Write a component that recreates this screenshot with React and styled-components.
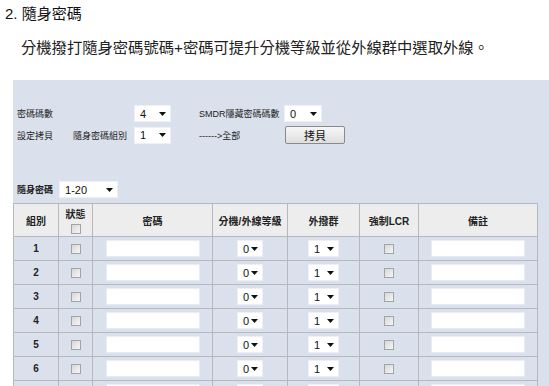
import React from 'react';
import styled, { createGlobalStyle } from 'styled-components';

const Global = createGlobalStyle`
  html, body { margin: 0; padding: 0; background: #fff; overflow: hidden; }
  body { font-family: "Liberation Sans", "Noto Sans CJK TC", sans-serif; color: #222; }
`;

const Page = styled.div`
  width: 549px;
  height: 386px;
  overflow: hidden;
`;

const Title = styled.h2`
  margin: 0;
  padding: 5px 0 0 5px;
  font-size: 15px;
  font-weight: normal;
  line-height: 18px;
  color: #111;
`;

const Desc = styled.p`
  margin: 17px 0 0 21px;
  font-size: 15.3px;
  line-height: 16px;
  color: #222;
  white-space: nowrap;
`;

const Panel = styled.div`
  margin: 24px 0 0 13px;
  width: 560px;
  height: 320px;
  background: #dae1ec;
  padding-top: 25px;
  box-sizing: border-box;
`;

const Settings = styled.div`
  display: grid;
  grid-template-columns: 56px 61px 65px 85px auto;
  row-gap: 4px;
  align-items: center;
  padding-left: 4px;
  font-size: 9px;
  color: #222;
`;

const Label = styled.span`
  grid-column: ${p => p.$span || 'auto'};
  white-space: nowrap;
`;

const SelectBox = styled.div`
  display: inline-flex;
  align-items: center;
  justify-content: space-between;
  width: ${p => p.$w}px;
  height: 17px;
  box-sizing: border-box;
  padding: 0 4px 0 5px;
  background: #fff;
  border: 1px solid #eef0f4;
  font-size: 11px;
  font-weight: normal;
  color: #111;
  vertical-align: middle;
`;

const Caret = () => (
  <svg width="7" height="4" viewBox="0 0 7 4">
    <path d="M0 0h7L3.5 4z" fill="#111" />
  </svg>
);

const Select = ({ w, value }) => (
  <SelectBox $w={w}>
    <span>{value}</span>
    <Caret />
  </SelectBox>
);

const Button = styled.button`
  margin-left: 1px;
  width: 60px;
  height: 18px;
  padding: 0;
  border: 1px solid #8a8a8a;
  border-radius: 2px;
  background: linear-gradient(#f7f7f7, #dedede);
  font-family: "Noto Sans CJK TC", sans-serif;
  font-size: 11px;
  line-height: 14px;
  color: #111;
`;

const GroupBar = styled.div`
  display: flex;
  align-items: center;
  gap: 6px;
  margin-top: 37px;
  padding-left: 4px;
  font-size: 9px;
  font-weight: bold;
  height: 17px;
`;

const Table = styled.table`
  margin-top: 5px;
  width: 524px;
  border-collapse: collapse;
  table-layout: fixed;
`;

const Th = styled.th`
  height: 32px;
  padding: 0;
  background: #ededed;
  border: 1px solid #b5b8bc;
  font-size: 10px;
  font-weight: bold;
  color: #222;
  text-align: center;
  vertical-align: middle;
`;

const Td = styled.td`
  height: 23px;
  padding: 0;
  border: 1px solid #b5b8bc;
  text-align: center;
  vertical-align: middle;
  font-size: 10px;
  font-weight: bold;
  color: #222;
`;

const Check = styled.input.attrs({ type: 'checkbox' })`
  appearance: none;
  display: inline-block;
  margin: 0;
  width: 10px;
  height: 10px;
  border: 1px solid #a3a3a3;
  background: linear-gradient(135deg, #d8d8d8, #f6f6f6);
  vertical-align: middle;
`;

const HeadStack = styled.div`
  display: flex;
  flex-direction: column;
  align-items: center;
  gap: 3px;
`;

const TextInput = styled.input.attrs({ type: 'text' })`
  display: inline-block;
  width: 94px;
  height: 17px;
  box-sizing: border-box;
  margin: 0;
  border: 1px solid #e9edf2;
  background: #fff;
  vertical-align: middle;
`;

const rows = [1, 2, 3, 4, 5, 6, 7];

export default function App() {
  return (
    <Page>
      <Global />
      <Title>2. 隨身密碼</Title>
      <Desc>分機撥打隨身密碼號碼+密碼可提升分機等級並從外線群中選取外線。</Desc>
      <Panel>
        <Settings>
          <Label $span="1 / 3">密碼碼數</Label>
          <Select w={37} value="4" />
          <Label>SMDR隱藏密碼碼數</Label>
          <Select w={38} value="0" />
          <Label>設定拷貝</Label>
          <Label>隨身密碼組別</Label>
          <Select w={37} value="1" />
          <Label>------&gt;全部</Label>
          <div><Button>拷貝</Button></div>
        </Settings>
        <GroupBar>
          <span>隨身密碼</span>
          <Select w={59} value="1-20" />
        </GroupBar>
        <Table>
          <colgroup>
            <col style={{ width: 45 }} />
            <col style={{ width: 34 }} />
            <col style={{ width: 120 }} />
            <col style={{ width: 75 }} />
            <col style={{ width: 72 }} />
            <col style={{ width: 59 }} />
            <col style={{ width: 119 }} />
          </colgroup>
          <thead>
            <tr>
              <Th>組別</Th>
              <Th>
                <HeadStack>
                  <span>狀態</span>
                  <Check />
                </HeadStack>
              </Th>
              <Th>密碼</Th>
              <Th>分機/外線等級</Th>
              <Th>外撥群</Th>
              <Th>強制LCR</Th>
              <Th>備註</Th>
            </tr>
          </thead>
          <tbody>
            {rows.map(n => (
              <tr key={n}>
                <Td>{n}</Td>
                <Td><Check /></Td>
                <Td><TextInput /></Td>
                <Td><Select w={26} value="0" /></Td>
                <Td><Select w={31} value="1" /></Td>
                <Td><Check /></Td>
                <Td><TextInput /></Td>
              </tr>
            ))}
          </tbody>
        </Table>
      </Panel>
    </Page>
  );
}
